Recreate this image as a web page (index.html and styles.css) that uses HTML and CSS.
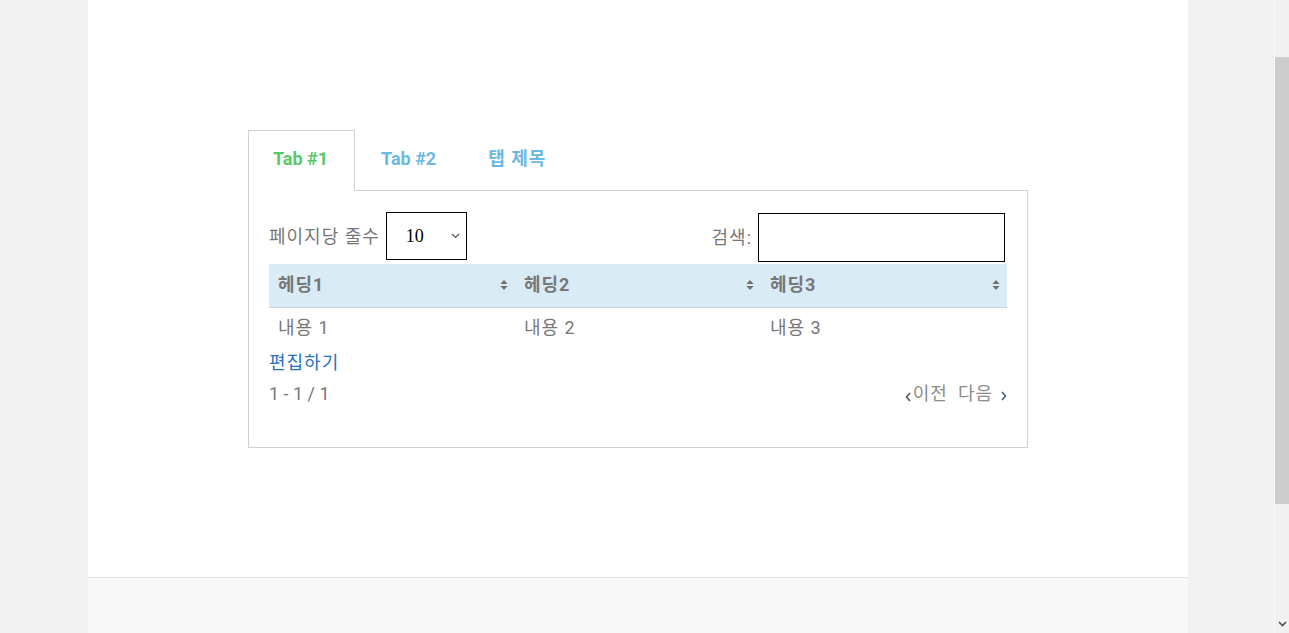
FILE: index.html
```html
<!DOCTYPE html>
<html lang="ko">
<head>
<meta charset="utf-8">
<title>Tabs</title>
<link rel="stylesheet" href="styles.css">
</head>
<body>
<div class="viewport">
  <div class="page">
    <main class="main">
      <div class="tabs">
        <div class="tab-list">
          <div class="tab active">Tab #1</div>
          <div class="tab">Tab #2</div>
          <div class="tab ko">탭 제목</div>
        </div>
        <div class="panel">
          <div class="controls">
            <label class="ctl"><span class="ko">페이지당 줄수</span>
              <span class="select"><span class="sel-val">10</span>
                <svg class="sel-arrow" width="9" height="6" viewBox="0 0 9 6"><path d="M1 1l3.5 3.5L8 1" fill="none" stroke="#555" stroke-width="1.2"/></svg>
              </span>
            </label>
            <label class="ctl"><span class="ko">검색:</span> <span class="search"></span></label>
          </div>
          <table class="grid">
            <thead>
              <tr>
                <th><div class="th-in"><span class="ko">헤딩1</span><svg class="sort" width="8" height="12" viewBox="0 0 8 12"><path d="M4 1L7.6 5H0.4Z M4 11L7.6 7H0.4Z" fill="#707070"/></svg></div></th>
                <th><div class="th-in"><span class="ko">헤딩2</span><svg class="sort" width="8" height="12" viewBox="0 0 8 12"><path d="M4 1L7.6 5H0.4Z M4 11L7.6 7H0.4Z" fill="#707070"/></svg></div></th>
                <th><div class="th-in"><span class="ko">헤딩3</span><svg class="sort" width="8" height="12" viewBox="0 0 8 12"><path d="M4 1L7.6 5H0.4Z M4 11L7.6 7H0.4Z" fill="#707070"/></svg></div></th>
              </tr>
            </thead>
            <tbody>
              <tr><td class="ko">내용 1</td><td class="ko">내용 2</td><td class="ko">내용 3</td></tr>
            </tbody>
          </table>
          <a class="edit ko" href="#">편집하기</a>
          <div class="pager">
            <span class="count">1 - 1 / 1</span>
            <span class="nav">
              <svg class="chev left" width="6" height="10" viewBox="0 0 6 10"><path d="M5 1L1.5 5 5 9" fill="none" stroke="#555" stroke-width="1.6"/></svg><span class="prev ko">이전</span>
              <span class="next ko">다음</span><svg class="chev right" width="6" height="10" viewBox="0 0 6 10"><path d="M1 1l3.5 4L1 9" fill="none" stroke="#4a5a8a" stroke-width="1.6"/></svg>
            </span>
          </div>
        </div>
      </div>
    </main>
    <footer class="footer"></footer>
  </div>
</div>
<div class="scrollbar">
  <div class="thumb"></div>
  <div class="track-rest"></div>
  <svg class="arrow-down" width="15" height="15" viewBox="0 0 15 15"><path d="M4 6l3.5 3.5L11 6" fill="none" stroke="#505050" stroke-width="1.6"/></svg>
</div>
</body>
</html>
```
FILE: styles.css
```css
html, body {
  margin: 0;
  height: 100%;
}
body {
  display: flex;
  background: #f2f2f2;
  font-family: Roboto, "Noto Sans CJK KR", sans-serif;
  overflow: hidden;
}
.ko {
  letter-spacing: 1px;
}
.viewport {
  flex: 1;
  height: 633px;
  overflow: hidden;
}
.page {
  width: 1100px;
  margin-left: 88px;
  height: 633px;
  display: flex;
  flex-direction: column;
}
.main {
  height: 577px;
  background: #fff;
  padding-top: 130px;
  box-sizing: border-box;
}
.footer {
  flex: 1;
  background: #f8f8f8;
  border-top: 1px solid #e2e2e2;
}
.tabs {
  width: 780px;
  margin-left: 160px;
}
.tab-list {
  display: flex;
}
.tab {
  height: 59px;
  line-height: 55px;
  padding: 0 25px;
  font-size: 18px;
  font-weight: 700;
  color: #6bb9e2;
  border: 1px solid transparent;
  border-bottom: none;
}
.tab.active {
  color: #5ac86b;
  border-color: #d0d0d0;
  background: #fff;
  padding: 0 26px 0 24px;
  position: relative;
  z-index: 1;
  margin-bottom: -1px;
  height: 60px;
}
.panel {
  border: 1px solid #d0d0d0;
  padding: 21px 20px 0;
  height: 258px;
  box-sizing: border-box;
  color: #777;
  font-size: 18px;
}
.controls {
  display: flex;
  justify-content: space-between;
  align-items: flex-start;
  height: 52px;
}
.ctl {
  display: flex;
  align-items: center;
  gap: 6px;
}
.ctl .ko {
  margin-top: -2px;
}
.select {
  width: 81px;
  height: 48px;
  box-sizing: border-box;
  border: 1px solid #000;
  display: flex;
  align-items: center;
  justify-content: space-between;
  padding: 0 6px 0 19px;
  color: #000;
  font-family: "Liberation Serif", serif;
  font-size: 18px;
}
.sel-arrow {
  margin-top: -1px;
}
.search {
  display: block;
  width: 247px;
  height: 49px;
  box-sizing: border-box;
  border: 1px solid #000;
  margin-top: 1px;
  margin-right: 2px;
}
.grid {
  width: 100%;
  border-collapse: collapse;
  table-layout: fixed;
}
.grid th {
  background: #d9ebf5;
  height: 43px;
  padding: 0 7px 0 9px;
  text-align: left;
  font-weight: 700;
  color: #777;
  border-bottom: 1px solid #cfd6db;
}
.th-in {
  display: flex;
  align-items: center;
  justify-content: space-between;
  margin-top: -6px;
}
.th-in .sort {
  margin-top: 5px;
}
.grid td {
  height: 36px;
  padding: 0 9px;
  color: #777;
}
.edit {
  display: block;
  color: #2672c0;
  text-decoration: none;
  line-height: 30px;
  margin-top: 4px;
  margin-bottom: 1px;
}
.pager {
  display: flex;
  justify-content: space-between;
  align-items: center;
  line-height: 30px;
}
.nav {
  display: flex;
  align-items: center;
  color: #8c8c8c;
  margin-top: -1px;
}
.prev { margin-left: 2px; margin-right: 10px; }
.next { margin-right: 8px; }
.chev { margin-top: 6px; }
.chev.right { margin-top: 4px; }
.scrollbar {
  width: 15px;
  height: 633px;
  background: #f1f1f1;
  display: flex;
  flex-direction: column;
  border-left: 1px solid #f8f8f8;
  box-sizing: border-box;
}
.thumb {
  margin-top: 57px;
  height: 447px;
  background: #cdcdcd;
}
.track-rest { flex: 1; }
.arrow-down { display: block; margin-bottom: 2px; }
```
